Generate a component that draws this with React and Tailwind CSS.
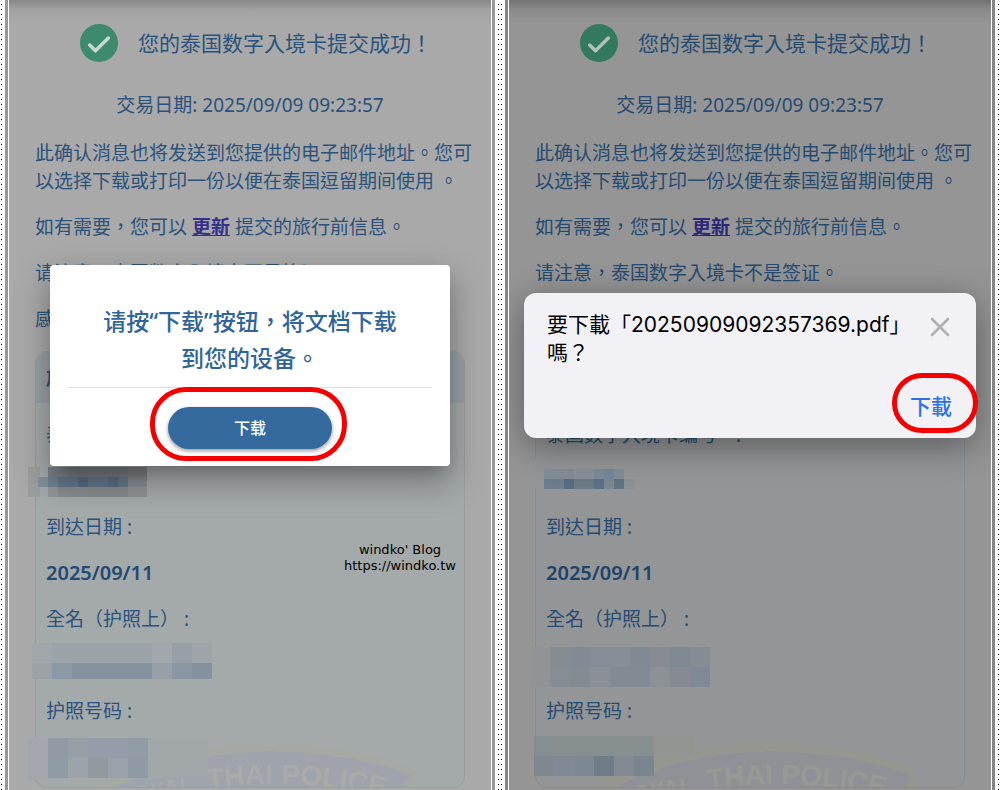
import { Check, X } from 'lucide-react';

const leftTheme = {
  text: 'text-[#2a527c]',
  strong: 'text-[#214a75]',
  link: 'text-[#35308a]',
  page: 'bg-[linear-gradient(#888888_0,#a2a2a2_10px,#a9a9a9_24px)]',
  frame: 'bg-[#979797]',
  card: 'bg-[#a4a9aa] border-[#999d9f]',
  cardHead: 'bg-[#98a1a7]',
  check: 'bg-[#3d8a6f] text-[#c9d6d2]',
};

const rightTheme = {
  text: 'text-[#254b71]',
  strong: 'text-[#1e446b]',
  link: 'text-[#2c2778]',
  page: 'bg-[linear-gradient(#727272_0,#8b8b8b_10px,#959595_24px)]',
  frame: 'bg-[#858585]',
  card: 'bg-[#949597] border-[#898b8d]',
  cardHead: 'bg-[#8a9197]',
  check: 'bg-[#33795f] text-[#b3bfbb]',
};

// [x, y, width, height, fill], relative to the card
const leftBlocks = [
  [-8, 115, 12, 30, '#9c9e9f'], [2, 125, 10, 10, '#84909a'], [12, 115, 20, 10, '#7b8289'], [32, 115, 60, 10, '#777c80'], [92, 115, 19, 10, '#7f8284'],
  [12, 125, 10, 10, '#708294'], [22, 125, 20, 10, '#63788b'], [42, 125, 10, 10, '#566c82'], [52, 125, 20, 10, '#63778a'],
  [72, 125, 10, 10, '#586f84'], [82, 125, 10, 10, '#66798a'], [92, 125, 19, 10, '#878c8f'], [12, 135, 10, 10, '#929698'], [22, 135, 70, 10, '#888c8f'], [92, 135, 19, 10, '#919496'],
  [-4, 291, 20, 20, '#a0a6a9'], [16, 291, 100, 20, '#9ca3a8'], [116, 291, 20, 20, '#a2a7ad'], [136, 291, 20, 20, '#989fa7'], [156, 291, 20, 20, '#9ea4aa'],
  [-4, 311, 20, 16, '#9ba3a8'], [16, 311, 20, 16, '#8b98a5'], [36, 311, 80, 16, '#8792a0'], [116, 311, 20, 16, '#979fa8'], [136, 311, 20, 16, '#8c97a5'], [156, 311, 20, 16, '#85919f'],
  [-8, 386, 20, 42, '#a4a8aa'], [12, 386, 20, 20, '#929ba5'], [32, 386, 20, 20, '#979fa7'], [52, 386, 40, 20, '#959daa'], [92, 386, 20, 20, '#929ca6'],
  [12, 406, 20, 20, '#919ba6'], [32, 406, 20, 20, '#9da4a9'], [52, 406, 20, 20, '#929a9f'], [72, 406, 20, 20, '#99a1a9'], [92, 406, 20, 20, '#8f9aa6'], [112, 386, 60, 40, '#a1a6a9'],
];

const rightBlocks = [
  [-8, 106, 16, 30, '#949596'], [8, 117, 30, 10, '#828d98'], [38, 117, 20, 10, '#879098'], [58, 117, 10, 10, '#7d8997'], [68, 117, 10, 10, '#76869a'], [78, 117, 10, 10, '#828c97'],
  [8, 127, 20, 10, '#6b7d8e'], [28, 127, 10, 10, '#566c80'], [38, 127, 20, 10, '#697985'], [58, 127, 10, 10, '#5a7084'], [68, 127, 10, 10, '#7a8794'], [78, 127, 10, 10, '#5f7484'], [88, 127, 10, 10, '#8a9093'],
  [-6, 295, 20, 40, '#919396'], [14, 295, 20, 20, '#868d92'], [34, 295, 20, 20, '#828b93'], [54, 295, 40, 20, '#878d97'], [94, 295, 20, 20, '#808994'], [114, 295, 20, 20, '#868c91'], [134, 295, 20, 20, '#7f8992'], [154, 295, 20, 20, '#868c94'],
  [14, 315, 20, 20, '#878c95'], [34, 315, 20, 20, '#838c91'], [54, 315, 20, 20, '#8a9096'], [74, 315, 40, 20, '#838a93'], [114, 315, 20, 20, '#8c9196'], [134, 315, 20, 20, '#858b91'], [154, 315, 20, 20, '#808997'],
  [-2, 384, 20, 20, '#858e93'], [18, 384, 100, 20, '#868e90'], [-2, 404, 20, 20, '#7f8890'], [18, 404, 20, 20, '#808896'], [38, 404, 20, 20, '#7e8794'],
  [58, 404, 20, 20, '#707c88'], [78, 404, 20, 20, '#838a93'], [98, 404, 20, 20, '#7b8590'], [118, 384, 40, 20, '#939593'],
];

const Dots = () => (
  <div className="w-px shrink-0 bg-[repeating-linear-gradient(to_bottom,#fff_0_4px,#000_4px_5px)]" />
);

const Emblem = ({ id, edge, band, letters }) => (
  <g clipPath={`url(#${id}-clip)`}>
    <clipPath id={`${id}-clip`}><rect x="0" y="0" width="427" height="435" /></clipPath>
    <path d="M50 442 C70 418 120 402 172 396 C240 384 330 396 380 418 L382 442 Z" fill={edge} />
    <path d="M70 442 C90 426 130 412 172 405 C235 393 320 401 374 423 L366 442 Z" fill={band} />
    <path id={`${id}-arc`} d="M172 437 Q272 422 376 452" fill="none" />
    <path id={`${id}-arc2`} d="M84 456 Q124 440 172 442" fill="none" />
    <text className="font-['Liberation_Sans',sans-serif] text-[28px] font-bold" fill={letters}>
      <textPath href={`#${id}-arc`}>THAI POLICE</textPath>
    </text>
    <text className="font-['Liberation_Sans',sans-serif] text-[22px] font-bold" fill={letters}>
      <textPath href={`#${id}-arc2`}>ROYAL</textPath>
    </text>
  </g>
);

const Field = ({ label, value, theme }) => (
  <>
    <dt className="h-7">{label}</dt>
    <dd className={`h-7 text-xl leading-7 font-semibold ${theme.strong}`}>{value}</dd>
  </>
);

const Screen = ({ id, theme, thanks, cardTitle, blocks, emblem, children }) => (
  <section className="flex min-h-[790px] min-w-0 flex-1 bg-white px-px">
    <Dots />
    <div className={`mx-[3px] flex min-w-0 flex-1 px-[3px] ${theme.frame}`}>
      <div className={`relative min-w-0 flex-1 overflow-hidden border-x border-white px-[26px] text-[19px] leading-7 ${theme.page} ${theme.text}`}>
        <header className="flex items-center justify-center gap-5 pt-6 pl-3">
          <span className={`flex size-[38px] shrink-0 items-center justify-center rounded-full ${theme.check}`}>
            <Check className="mt-1 size-7" strokeWidth={3} />
          </span>
          <h1 className="text-[21px] whitespace-nowrap">您的泰国数字入境卡提交成功！</h1>
        </header>
        <p className="mt-[29px] text-center">交易日期: 2025/09/09 09:23:57</p>
        <div className="mt-5 flex flex-col gap-[18px] whitespace-nowrap">
          <p>此确认消息也将发送到您提供的电子邮件地址。您可<br />以选择下载或打印一份以便在泰国逗留期间使用 。</p>
          <p>如有需要，您可以 <a href="#update" className={`font-bold underline ${theme.link}`}>更新</a> 提交的旅行前信息。</p>
          <p>请注意，泰国数字入境卡不是签证。</p>
          <p className="h-7">{thanks}</p>
        </div>
        <div className={`relative mt-[18px] rounded-xl border ${theme.card}`}>
          <h2 className={`h-[51px] rounded-t-xl px-[10px] py-3 font-bold ${theme.cardHead}`}>{cardTitle}</h2>
          <svg className="absolute inset-0 h-full w-full overflow-visible" shapeRendering="crispEdges" aria-hidden="true">
            <Emblem id={id} {...emblem} />
            {blocks.map(([x, y, w, h, fill], i) => (
              <rect key={i} x={x} y={y} width={w} height={h} fill={fill} />
            ))}
          </svg>
          <dl className="relative flex flex-col gap-[18px] px-[10px] pt-[18px] pb-4">
            <Field theme={theme} label="泰国数字入境卡编号　:" />
            <Field theme={theme} label="到达日期 :" value="2025/09/11" />
            <Field theme={theme} label="全名（护照上） :" />
            <Field theme={theme} label="护照号码 :" />
          </dl>
        </div>
        {children}
      </div>
    </div>
    <Dots />
  </section>
);

const DownloadModal = () => (
  <div className="absolute inset-x-0 top-[265px] flex justify-center">
    <div role="dialog" className="w-[400px] rounded bg-white px-[18px] pt-[38px] pb-[17px] text-center shadow-[0_11px_15px_-7px_rgba(0,0,0,.2),0_14px_34px_3px_rgba(0,0,0,.28)]">
      <p className="text-[23px] leading-[37px] font-medium text-[#2f659b]">请按“下载”按钮，将文档下载<br />到您的设备。</p>
      <hr className="mt-[10px] mb-[19px] border-[#dcdcdc]" />
      <div className="relative mx-auto w-[164px]">
        <button className="h-[42px] w-full rounded-full bg-[#356a9f] text-base font-medium text-white shadow-[0_2px_4px_rgba(0,0,0,.4)]">下载</button>
        <span className="pointer-events-none absolute -top-5 -right-[15px] -bottom-3 -left-[18px] rounded-[36px] border-[5px] border-[#f50000]" />
      </div>
    </div>
  </div>
);

const PdfPrompt = () => (
  <div className="absolute inset-x-0 top-[293px] flex justify-center">
    <div role="dialog" className="w-[452px] rounded-xl bg-[#f2f1f6] pt-[18px] pr-6 pb-[17px] pl-[23px] text-black shadow-[0_8px_36px_rgba(0,0,0,.4)]">
      <div className="flex items-start justify-between">
        <p className="font-[Inter,'Noto_Sans_CJK_TC',sans-serif] text-[21px] whitespace-nowrap">要下載「20250909092357369.pdf」<br />嗎？</p>
        <button className="text-[#b0b0b4]" aria-label="關閉"><X className="-mr-1 size-8" strokeWidth={2} /></button>
      </div>
      <div className="mt-[25px] flex justify-end">
        <div className="relative">
          <button className="text-[21px] font-medium text-[#2f70e6]">下載</button>
          <span className="pointer-events-none absolute -top-[19px] -right-[26px] -bottom-3 -left-[18px] rounded-[36px] border-[5px] border-[#f50000]" />
        </div>
      </div>
    </div>
  </div>
);

export default function App() {
  return (
    <main lang="zh-Hant" className="flex min-h-screen font-['Noto_Sans','Noto_Sans_CJK_TC',sans-serif]">
      <Screen
        id="left"
        theme={leftTheme}
        thanks="感谢您。"
        cardTitle="旅客信息"
        blocks={leftBlocks}
        emblem={{ edge: '#a5a9a4', band: '#9ea3ac', letters: '#a8aba8' }}
      >
        <DownloadModal />
        <p className="absolute top-[542px] right-[35px] text-center font-['DejaVu_Sans',sans-serif] text-[13px] leading-4 text-black">windko' Blog<br />https://windko.tw</p>
      </Screen>
      <Screen
        id="right"
        theme={rightTheme}
        blocks={rightBlocks}
        emblem={{ edge: '#959690', band: '#909196', letters: '#989993' }}
      >
        <PdfPrompt />
      </Screen>
    </main>
  );
}
